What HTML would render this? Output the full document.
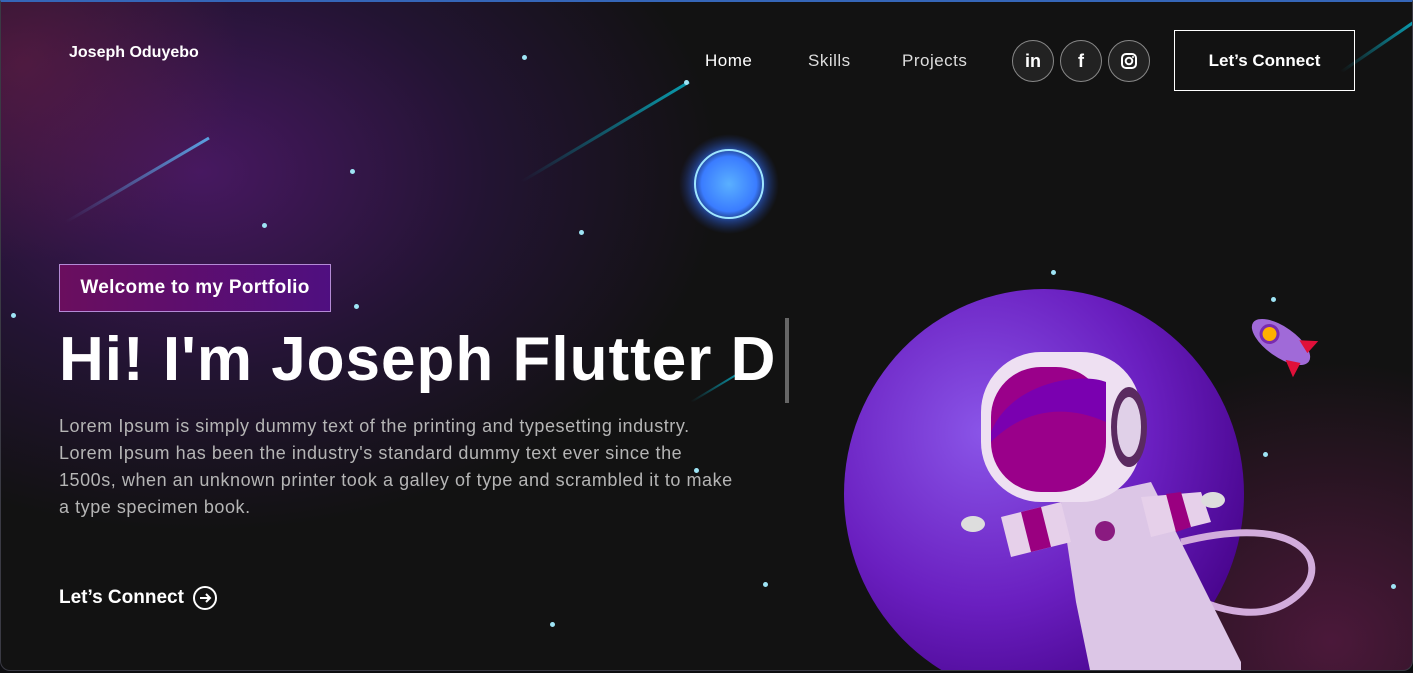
<!DOCTYPE html>
<html><head><meta charset="utf-8"><style>
*{margin:0;padding:0;box-sizing:border-box}
html,body{width:1413px;height:673px;overflow:hidden;background:#0d0d10}
body{font-family:"Liberation Sans",sans-serif;color:#fff;position:relative}
.frame{position:absolute;left:0;top:0;width:1413px;height:671px;border:1px solid #3a3a44;border-top:2px solid #3566b8;border-radius:0 0 10px 10px;overflow:hidden;
background:
radial-gradient(ellipse 220px 200px at 20px 60px,rgba(110,30,70,.55),rgba(18,18,18,0) 100%),
radial-gradient(ellipse 520px 360px at 200px 170px,rgba(80,25,110,.85),rgba(55,22,90,.45) 55%,rgba(18,18,18,0) 100%),
radial-gradient(ellipse 320px 280px at 1330px 640px,rgba(85,25,65,.85),rgba(18,18,18,0) 100%),
#121212}
.abs{position:absolute}
.logo{left:68px;top:42px;font-size:16px;font-weight:bold}
.nav{top:49px;font-size:17px;color:#ddd;letter-spacing:.5px}
.soc{top:38px;width:42px;height:42px;border:1px solid #888;border-radius:50%;background:#222;display:flex;align-items:center;justify-content:center;font-weight:bold;font-size:18px}
.btn{left:1173px;top:28px;width:181px;height:61px;border:1px solid #fff;display:flex;align-items:center;justify-content:center;font-weight:bold;font-size:17px}
.tag{left:58px;top:262px;width:272px;height:48px;border:1px solid #b48ad6;background:linear-gradient(90deg,#6a0e5e,#4f0f80);font-weight:bold;font-size:19px;display:flex;align-items:center;justify-content:center;letter-spacing:.3px}
h1{position:absolute;left:58px;top:322px;font-size:62px;font-weight:bold;letter-spacing:1px;white-space:nowrap}
.cursor{left:784px;top:316px;width:4px;height:85px;background:#666}
p{position:absolute;left:58px;top:411px;width:680px;font-size:18px;line-height:27px;color:#b5b5b5;letter-spacing:.55px}
.lc{left:58px;top:583px;font-size:19px;font-weight:bold;display:flex;align-items:center;gap:8px}
.star{position:absolute;width:5px;height:5px;border-radius:50%;background:#9ee4f5}
</style></head><body><div class="frame">
<svg class="abs" style="left:0;top:0" width="1413" height="673">
<defs>
<linearGradient id="m1" x1="1" y1="0" x2="0" y2="1"><stop offset="0" stop-color="#5aa0e0"/><stop offset="1" stop-color="#5aa0e0" stop-opacity="0"/></linearGradient>
<linearGradient id="m2" x1="1" y1="0" x2="0" y2="1"><stop offset="0" stop-color="#0a9cb0"/><stop offset="1" stop-color="#0a9cb0" stop-opacity="0"/></linearGradient>
<radialGradient id="pl" cx="0.35" cy="0.35" r="0.7"><stop offset="0" stop-color="#8a55e8"/><stop offset="0.6" stop-color="#6a1fc0"/><stop offset="1" stop-color="#4a0690"/></radialGradient>
<radialGradient id="orb" cx=".5" cy=".5" r=".5"><stop offset="0" stop-color="#5ab0ff"/><stop offset=".55" stop-color="#3a7cff"/><stop offset=".75" stop-color="#2b5fd8" stop-opacity=".5"/><stop offset="1" stop-color="#2040a0" stop-opacity="0"/></radialGradient>
</defs>
<line x1="208" y1="136" x2="65" y2="220" stroke="url(#m1)" stroke-width="3"/>
<line x1="688" y1="80" x2="520" y2="180" stroke="url(#m2)" stroke-width="3"/>
<line x1="1413" y1="20" x2="1340" y2="70" stroke="url(#m2)" stroke-width="3"/>
<line x1="740" y1="370" x2="690" y2="400" stroke="url(#m2)" stroke-width="2"/>
<circle cx="728" cy="182" r="50" fill="url(#orb)"/>
<circle cx="728" cy="182" r="34" fill="none" stroke="#9fe6ff" stroke-width="2"/>
<ellipse cx="1043" cy="492" rx="200" ry="205" fill="url(#pl)"/>
<g transform="translate(1280,340) rotate(35)">
<ellipse cx="0" cy="0" rx="34" ry="15" fill="#a06ad8"/>
<circle cx="-14" cy="0" r="10" fill="#7a2bb0"/><circle cx="-14" cy="0" r="7" fill="#ffb000"/>
<path d="M14 -12 L30 -22 L28 -6Z M14 12 L30 22 L28 6Z" fill="#e0103a"/>
</g>
<path d="M1180 540 C1300 510 1330 560 1300 590 C1260 630 1200 600 1180 590" fill="none" stroke="#d2acdc" stroke-width="7"/>
<path d="M1060 500 L1150 480 L1190 560 L1240 660 L1240 673 L1090 673 L1075 600Z" fill="#dcc6e6"/>
<path d="M1000 515 L1060 500 L1070 540 L1010 555Z" fill="#e6d0ea"/>
<path d="M1140 495 L1200 490 L1210 520 L1150 535Z" fill="#e6d0ea"/>
<path d="M1020 510 L1040 505 L1050 545 L1030 550Z M1165 492 L1180 490 L1190 525 L1175 530Z" fill="#9a0080"/>
<ellipse cx="972" cy="522" rx="12" ry="8" fill="#ddd"/>
<ellipse cx="1212" cy="498" rx="12" ry="8" fill="#ddd"/>
<circle cx="1104" cy="529" r="10" fill="#8a1a80"/>
<rect x="980" y="350" width="160" height="150" rx="60" fill="#eee0f2"/>
<rect x="990" y="365" width="115" height="125" rx="50" fill="#9a008a"/>
<path d="M990 430 C1010 380 1080 370 1105 380 L1105 420 C1060 400 1020 410 990 440Z" fill="#7a00b0"/>
<ellipse cx="1128" cy="425" rx="18" ry="40" fill="#5a2a60"/>
<ellipse cx="1128" cy="425" rx="12" ry="30" fill="#e0d0e8"/>
</svg>
<div class="star" style="left:521px;top:53px"></div><div class="star" style="left:349px;top:167px"></div>
<div class="star" style="left:261px;top:221px"></div><div class="star" style="left:578px;top:228px"></div>
<div class="star" style="left:10px;top:311px"></div><div class="star" style="left:353px;top:302px"></div>
<div class="star" style="left:1050px;top:268px"></div><div class="star" style="left:1270px;top:295px"></div>
<div class="star" style="left:1262px;top:450px"></div><div class="star" style="left:1390px;top:582px"></div>
<div class="star" style="left:693px;top:466px"></div><div class="star" style="left:762px;top:580px"></div>
<div class="star" style="left:549px;top:620px"></div><div class="star" style="left:683px;top:78px"></div>
<div class="abs logo">Joseph Oduyebo</div>
<div class="abs nav" style="left:704px;color:#fff">Home</div>
<div class="abs nav" style="left:807px">Skills</div>
<div class="abs nav" style="left:901px">Projects</div>
<div class="abs soc" style="left:1011px">in</div>
<div class="abs soc" style="left:1059px">f</div>
<div class="abs soc" style="left:1107px"><svg width="18" height="18" viewBox="0 0 18 18"><rect x="2" y="2" width="14" height="14" rx="4" fill="none" stroke="#fff" stroke-width="2"/><circle cx="9" cy="9" r="3.3" fill="none" stroke="#fff" stroke-width="2"/><circle cx="13" cy="5" r="1" fill="#fff"/></svg></div>
<div class="abs btn">Let’s Connect</div>
<div class="abs tag">Welcome to my Portfolio</div>
<h1>Hi! I'm Joseph Flutter D</h1>
<div class="abs cursor"></div>
<p>Lorem Ipsum is simply dummy text of the printing and typesetting industry. Lorem Ipsum has been the industry's standard dummy text ever since the 1500s, when an unknown printer took a galley of type and scrambled it to make a type specimen book.</p>
<div class="abs lc">Let’s Connect <svg width="26" height="26" viewBox="0 0 26 26"><circle cx="13" cy="13" r="11" fill="none" stroke="#fff" stroke-width="2"/><path d="M8 13h10M14 9l4 4-4 4" fill="none" stroke="#fff" stroke-width="2"/></svg></div>
</div></body></html>
